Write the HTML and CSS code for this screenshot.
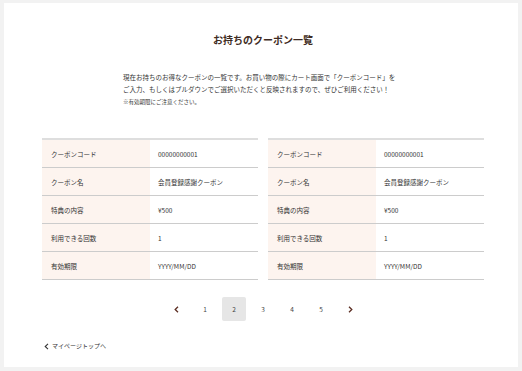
FILE: index.html
```html
<!DOCTYPE html>
<html lang="ja">
<head>
  <meta charset="UTF-8">
  <title>お持ちのクーポン一覧</title>
  <link rel="stylesheet" href="styles.css">
</head>
<body>

<main class="card">
  <h1 class="page-title">お持ちのクーポン一覧</h1>

  <div class="lead">
    <p>現在お持ちのお得なクーポンの一覧です。お買い物の際にカート画面で「クーポンコード」を<br>ご入力、もしくはプルダウンでご選択いただくと反映されますので、ぜひご利用ください！</p>
    <p class="note">※有効期限にご注意ください。</p>
  </div>

  <div class="coupons">
    <table class="coupon">
      <tr><th>クーポンコード</th><td>00000000001</td></tr>
      <tr><th>クーポン名</th><td>会員登録感謝クーポン</td></tr>
      <tr><th>特典の内容</th><td>¥500</td></tr>
      <tr><th>利用できる回数</th><td>1</td></tr>
      <tr><th>有効期限</th><td>YYYY/MM/DD</td></tr>
    </table>
    <table class="coupon">
      <tr><th>クーポンコード</th><td>00000000001</td></tr>
      <tr><th>クーポン名</th><td>会員登録感謝クーポン</td></tr>
      <tr><th>特典の内容</th><td>¥500</td></tr>
      <tr><th>利用できる回数</th><td>1</td></tr>
      <tr><th>有効期限</th><td>YYYY/MM/DD</td></tr>
    </table>
  </div>

  <nav class="pager">
    <a class="arrow" href="#"><svg width="5" height="7" viewBox="0 0 5 7"><polyline points="4,0.8 1.2,3.5 4,6.2" fill="none" stroke="#5b2d22" stroke-width="1.3"/></svg></a>
    <a href="#">1</a>
    <a class="current" href="#">2</a>
    <a href="#">3</a>
    <a href="#">4</a>
    <a href="#">5</a>
    <a class="arrow" href="#"><svg width="5" height="7" viewBox="0 0 5 7"><polyline points="1,0.8 3.8,3.5 1,6.2" fill="none" stroke="#5b2d22" stroke-width="1.3"/></svg></a>
  </nav>

  <a class="back" href="#"><svg width="5" height="7" viewBox="0 0 5 7"><polyline points="4,0.8 1.2,3.5 4,6.2" fill="none" stroke="#333" stroke-width="1.1"/></svg>マイページトップへ</a>
</main>

</body>
</html>
```

FILE: styles.css
```css
body {
  margin: 0;
  padding: 3px 4px 4px;
  background-color: #f2f2f2;
  font-family: "Noto Sans CJK JP", "Noto Sans", sans-serif;
  color: #333;
}

.card {
  background-color: #fff;
  height: 364px;
  box-sizing: border-box;
  padding: 30px 34px 0 38px;
}

.page-title {
  margin: 0;
  font-size: 10px;
  line-height: 14px;
  font-weight: bold;
  color: #3e2b23;
  text-align: center;
}

.lead {
  width: 280px;
  margin: 24px auto 0;
  font-size: 6.5px;
  line-height: 12px;
}

.lead p {
  margin: 0;
}

.lead .note {
  margin-top: 1px;
  font-size: 5.5px;
}

.coupons {
  display: flex;
  gap: 10px;
  margin-top: 30px;
}

.coupon {
  flex: 1;
  border-collapse: collapse;
  border-top: 2px solid #dedede;
  font-size: 6.5px;
}

.coupon th,
.coupon td {
  height: 27px;
  padding: 0 8px;
  border-bottom: 1px solid #cccccc;
  text-align: left;
  font-weight: normal;
}

.coupon th {
  width: 91px;
  padding-left: 9px;
  background-color: #fdf4ef;
}

.pager {
  display: flex;
  justify-content: center;
  gap: 5px;
  margin-top: 17px;
}

.pager a {
  width: 24px;
  height: 24px;
  display: flex;
  align-items: center;
  justify-content: center;
  border-radius: 2px;
  font-size: 6.5px;
  color: #444;
  text-decoration: none;
}

.pager .current {
  background-color: #e6e6e6;
}

.back {
  display: flex;
  align-items: center;
  gap: 3px;
  width: max-content;
  margin: 20px 0 0 2px;
  font-size: 6px;
  line-height: 10px;
  color: #333;
  text-decoration: none;
}
```
